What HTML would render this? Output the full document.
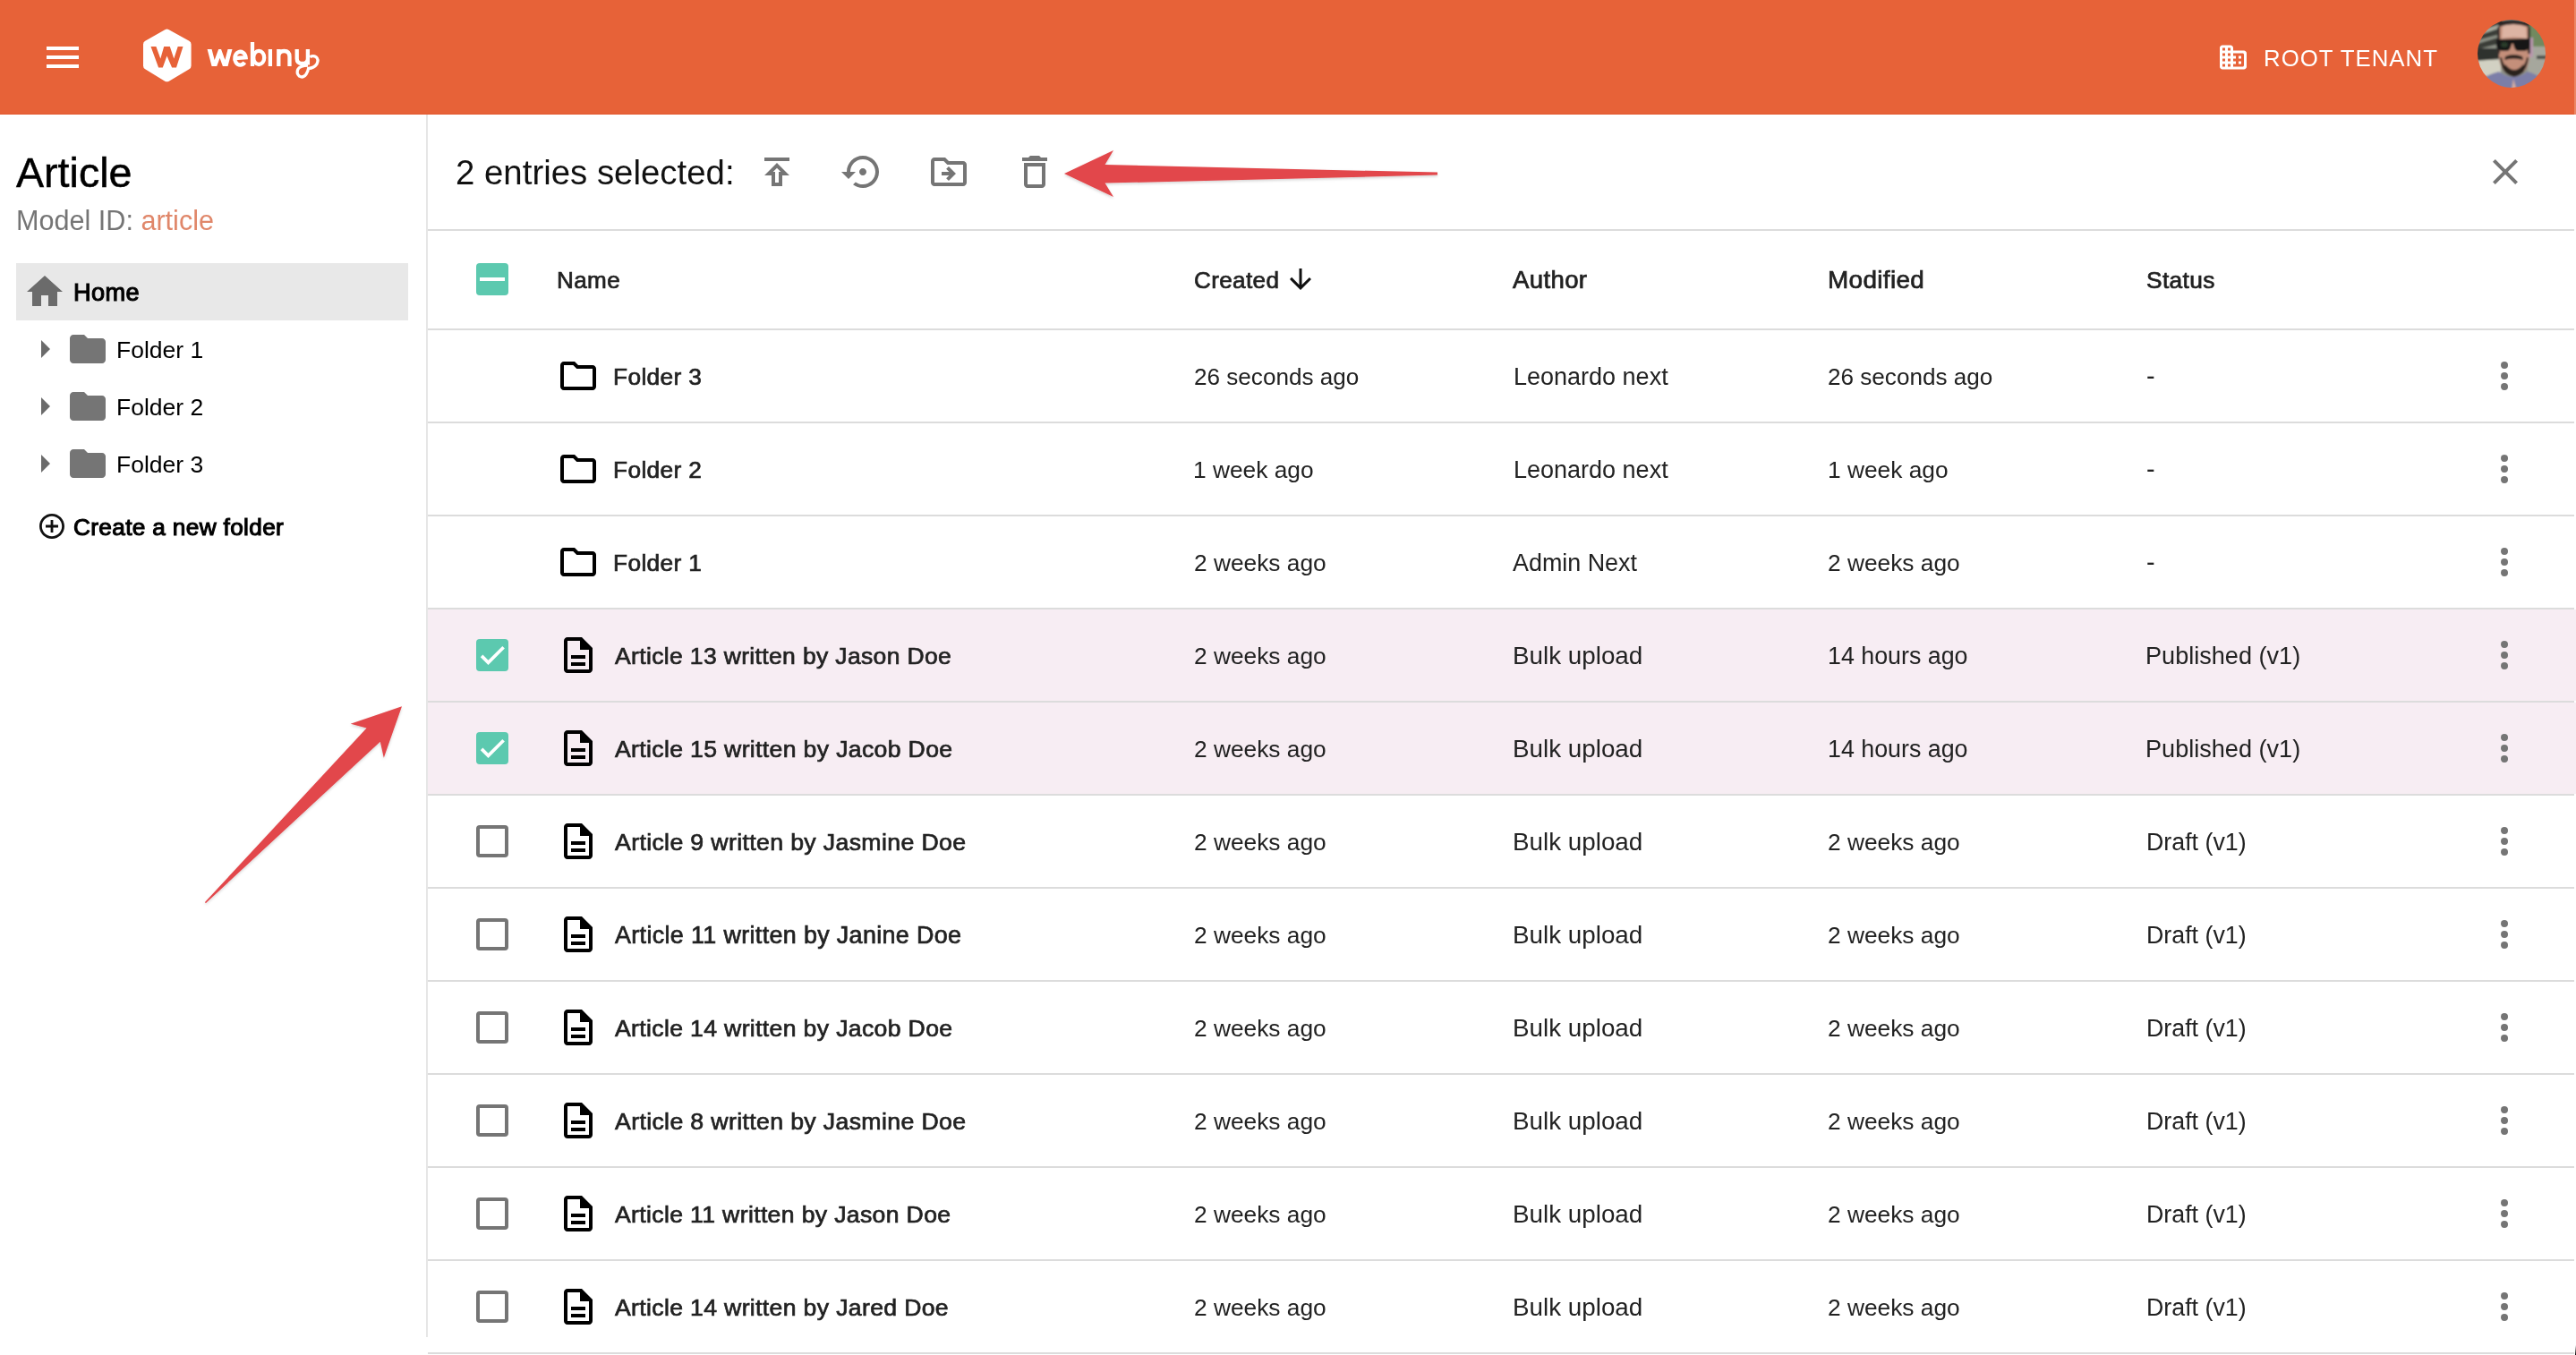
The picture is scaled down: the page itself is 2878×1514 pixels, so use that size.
<!DOCTYPE html><html><head><meta charset="utf-8"><style>
html,body{margin:0;padding:0;}
body{width:2878px;height:1514px;overflow:hidden;background:#fff;position:relative;font-family:"Liberation Sans",sans-serif;}
.t{position:absolute;white-space:nowrap;line-height:1;will-change:transform;}
.a{position:absolute;}
svg{position:absolute;overflow:visible;}
</style></head><body>
<div class="a" style="left:0;top:0;width:2878px;height:128px;background:#E76238;"></div>
<div class="a" style="left:0;top:127px;width:2876px;height:1px;background:#E2582E;"></div>
<div class="a" style="left:2876px;top:0;width:2px;height:128px;background:#EC8763;"></div>
<div class="a" style="left:52px;top:52px;width:36px;height:4px;background:#fff;"></div>
<div class="a" style="left:52px;top:62px;width:36px;height:4px;background:#fff;"></div>
<div class="a" style="left:52px;top:72px;width:36px;height:4px;background:#fff;"></div>
<svg style="left:150px;top:25px" width="75" height="75" viewBox="0 0 75 75">
<path d="M34.2 8.2 Q36.5 6.9 38.8 8.2 L61.4 20.8 Q63.6 22 63.6 24.6 L63.6 48.4 Q63.6 51 61.4 52.2 L38.8 65.7 Q36.5 67 34.2 65.7 L12.2 52.2 Q10 51 10 48.4 L10 24.6 Q10 22 12.2 20.8 Z" fill="#fff"/>
<path d="M18.5 27.1 L24.4 27.1 L29.3 40.4 L33.2 27.1 L39.8 27.1 L44.3 40.4 L48.7 27.1 L54.5 27.1 L47 50.6 L42.1 50.6 L36.5 37.6 L31.8 50.6 L27.1 50.6 Z" fill="#E76238"/>
</svg>
<svg style="left:225px;top:40px" width="140" height="55" viewBox="0 0 140 55">
<defs><clipPath id="wc"><rect x="0" y="14.9" width="140" height="19.1"/></clipPath></defs>
<g stroke="#fff" stroke-width="4.3" fill="none">
<path clip-path="url(#wc)" d="M8.3 12 L14.3 35 L20.6 18 L26.8 35 L32.8 12" stroke-width="4.8" stroke-linejoin="miter" stroke-miterlimit="10"/>
<path d="M37.3 25 L49.6 24.2 A6.2 7.4 0 1 0 48.3 29.8"/>
<path d="M57 7 L57 34"/>
<ellipse cx="64.2" cy="24.4" rx="6" ry="7.6"/>
<path d="M76.9 15 L76.9 34"/>
<path d="M86.3 34 L86.3 15 M86.3 23 Q86.3 17 92.4 17 Q98.5 17 98.5 23.5 L98.5 34"/>
<path d="M106.7 15 L106.7 25.5 Q106.7 31 112.8 31 Q118.9 31 118.9 25.5 M118.9 15 L118.9 32.6"/>
</g>
<path d="M119 33.2 Q110 33.5 107.8 37.5 Q105.8 42 109.5 45.2 Q113.5 47.6 117 43 Q119 40 119.6 36.5 Q126 36 129 31.5 Q131.5 26.5 128 23.6 Q125 21.6 121.3 23.6" stroke="#fff" stroke-width="3.3" fill="none"/>
</svg>
<svg style="left:2477px;top:46px" width="36" height="36" viewBox="0 0 24 24"><path d="M12 7V5c0-1.1-.9-2-2-2H4c-1.1 0-2 .9-2 2v14c0 1.1.9 2 2 2h16c1.1 0 2-.9 2-2V9c0-1.1-.9-2-2-2h-8zM6 19H4v-2h2v2zm0-4H4v-2h2v2zm0-4H4V9h2v2zm0-4H4V5h2v2zm4 12H8v-2h2v2zm0-4H8v-2h2v2zm0-4H8V9h2v2zm0-4H8V5h2v2zm9 12h-7v-2h2v-2h-2v-2h2v-2h-2V9h7c.55 0 1 .45 1 1v8c0 .55-.45 1-1 1zm-1-8h-2v2h2v-2zm0 4h-2v2h2v-2z" fill="#fff"/></svg>
<svg style="left:2768px;top:22px" width="76" height="76" viewBox="0 0 76 76">
<defs><clipPath id="cc"><circle cx="38" cy="38" r="38"/></clipPath>
<filter id="bl" x="-10%" y="-10%" width="120%" height="120%"><feGaussianBlur stdDeviation="0.9"/></filter></defs>
<g clip-path="url(#cc)"><g filter="url(#bl)">
<rect x="-4" y="-4" width="84" height="84" fill="#8e9288"/>
<path d="M-4 6 L28 -4 L28 26 L-4 34Z" fill="#3a3e39"/>
<path d="M-4 14 L26 5 L26 9 L-4 19Z" fill="#a7ab9f"/>
<path d="M-4 24 L26 16 L26 19 L-4 28Z" fill="#8d9186"/>
<rect x="-4" y="32" width="28" height="14" fill="#2f332e"/>

<path d="M-4 46 L26 44 L26 62 L-4 64Z" fill="#d2d1c3"/>
<rect x="56" y="4" width="24" height="26" fill="#71895f"/>
<rect x="56" y="30" width="24" height="34" fill="#a6a79d"/>
<rect x="66" y="40" width="14" height="4" fill="#4d504b"/>
<rect x="58" y="20" width="4" height="22" fill="#b897ad"/>
<path d="M24 8 Q26 2 40 2 Q55 2 57 9 L58 42 Q57 60 41 64 Q25 60 24 42Z" fill="#c48f7a"/>
<path d="M28 7 Q40 3 54 8 L55 21 Q40 18 27 21Z" fill="#ddb4a3"/>
<path d="M22 3 Q40 -3 59 4 L57 8 Q40 2 24 8Z" fill="#2b2725"/>
<path d="M22 8 L25 8 L25 38 L22 38Z" fill="#3b322d"/>
<path d="M56 8 L59 8 L59 38 L56 38Z" fill="#3b322d"/>
<path d="M21 22 L59 21 L58 30 Q57 35 51 35 L45 35 Q41 34 40 27 L38 27 Q37 34 33 35 L27 35 Q22 34 21 30Z" fill="#151715"/>
<ellipse cx="30" cy="28" rx="4" ry="3" fill="#2a3a2c"/>
<path d="M31 41 Q40 37 50 41 L51 45 Q40 42 30 45Z" fill="#2a211d"/>
<path d="M25 42 Q26 61 41 64 Q55 61 57 42 L55 42 Q53 55 41 57 Q29 55 27 42Z" fill="#2c231f"/>
<path d="M31 50 Q41 62 51 50 L52 58 Q41 67 30 58Z" fill="#2c231f"/>
<path d="M-4 80 L-4 72 Q8 62 24 58 Q40 70 56 58 Q70 62 80 72 L80 80Z" fill="#7c7ea8"/>
<path d="M40 66 L44 80 L38 80Z" fill="#d8b0a0"/>
</g></g></svg>
<div class="a" style="left:476px;top:128px;width:2px;height:1366px;background:#E6E6E6;"></div>
<div class="a" style="left:18px;top:294px;width:438px;height:64px;background:#E8E8E8;"></div>
<svg style="left:26px;top:302px" width="48" height="48" viewBox="0 0 24 24"><path d="M10 20v-6h4v6h5v-8h3L12 3 2 12h3v8z" fill="#6b6b6b"/></svg>
<svg style="left:26px;top:366px" width="48" height="48" viewBox="0 0 24 24"><path d="M10 17l5-5-5-5v10z" fill="#6b6b6b"/></svg>
<svg style="left:74px;top:366px" width="48" height="48" viewBox="0 0 24 24"><path d="M10 4H4c-1.1 0-1.99.9-1.99 2L2 18c0 1.1.9 2 2 2h16c1.1 0 2-.9 2-2V8c0-1.1-.9-2-2-2h-8l-2-2z" fill="#757575"/></svg>
<svg style="left:26px;top:430px" width="48" height="48" viewBox="0 0 24 24"><path d="M10 17l5-5-5-5v10z" fill="#6b6b6b"/></svg>
<svg style="left:74px;top:430px" width="48" height="48" viewBox="0 0 24 24"><path d="M10 4H4c-1.1 0-1.99.9-1.99 2L2 18c0 1.1.9 2 2 2h16c1.1 0 2-.9 2-2V8c0-1.1-.9-2-2-2h-8l-2-2z" fill="#757575"/></svg>
<svg style="left:26px;top:494px" width="48" height="48" viewBox="0 0 24 24"><path d="M10 17l5-5-5-5v10z" fill="#6b6b6b"/></svg>
<svg style="left:74px;top:494px" width="48" height="48" viewBox="0 0 24 24"><path d="M10 4H4c-1.1 0-1.99.9-1.99 2L2 18c0 1.1.9 2 2 2h16c1.1 0 2-.9 2-2V8c0-1.1-.9-2-2-2h-8l-2-2z" fill="#757575"/></svg>
<svg style="left:44px;top:574px" width="28" height="28" viewBox="2 2 20 20"><path d="M13 7h-2v4H7v2h4v4h2v-4h4v-2h-4V7zm-1-5C6.48 2 2 6.48 2 12s4.48 10 10 10 10-4.48 10-10S17.52 2 12 2zm0 18c-4.41 0-8-3.59-8-8s3.59-8 8-8 8 3.59 8 8-3.59 8-8 8z" fill="#111"/></svg>
<svg style="left:844px;top:168px" width="48" height="48" viewBox="0 0 24 24"><path d="M5 4h14v2H5zm0 10h4v6h6v-6h4l-7-7-7 7zm8-2v6h-2v-6H9.83L12 9.83 14.17 12H13z" fill="#757575"/></svg>
<svg style="left:940px;top:168px" width="48" height="48" viewBox="0 0 24 24"><path d="M14 12c0-1.1-.9-2-2-2s-2 .9-2 2 .9 2 2 2 2-.9 2-2zm-2-9c-4.97 0-9 4.030-9 9H0l4 4 4-4H5c0-3.87 3.13-7 7-7s7 3.13 7 7-3.13 7-7 7c-1.51 0-2.910-.49-4.06-1.3l-1.42 1.44C8.04 20.3 9.94 21 12 21c4.97 0 9-4.03 9-9s-4.03-9-9-9z" fill="#757575"/></svg>
<svg style="left:1036px;top:168px" width="48" height="48" viewBox="0 0 24 24"><path d="M20 6h-8l-2-2H4c-1.1 0-1.99.9-1.99 2L2 18c0 1.1.9 2 2 2h16c1.1 0 2-.9 2-2V8c0-1.1-.9-2-2-2zm0 12H4V6h5.17l2 2H20v10zm-7.84-6H8v2h4.16l-1.59 1.59L11.99 17 16 13.01 11.990 9l-1.41 1.41L12.16 12z" fill="#757575"/></svg>
<svg style="left:1132px;top:168px" width="48" height="48" viewBox="0 0 24 24"><path d="M16 9v10H8V9h8m-1.5-6h-5l-1 1H5v2h14V4h-3.5l-1-1zM18 7H6v12c0 1.1.9 2 2 2h8c1.1 0 2-.9 2-2V7z" fill="#757575"/></svg>
<svg style="left:2775px;top:168px" width="48" height="48" viewBox="0 0 24 24"><path d="M19 6.41L17.59 5 12 10.59 6.41 5 5 6.41 10.59 12 5 17.59 6.41 19 12 13.41 17.590 19 19 17.59 13.41 12z" fill="#757575"/></svg>
<div class="a" style="left:478px;top:256px;width:2398px;height:2px;background:#DCDCDC;"></div>
<div class="a" style="left:532px;top:294px;width:36px;height:36px;border-radius:4px;background:#5CC9AF;"></div>
<div class="a" style="left:536px;top:310px;width:28px;height:4px;background:#fff;"></div>
<svg style="left:1441px;top:300px" width="24" height="24" viewBox="4 4 16 16"><path d="M20 12l-1.41-1.41L13 16.17V4h-2v12.17l-5.58-5.59L4 12l8 8 8-8z" fill="#111"/></svg>
<div class="a" style="left:478px;top:367px;width:2398px;height:2px;background:#DCDCDC;"></div>
<svg style="left:622px;top:396px" width="48" height="48" viewBox="0 0 24 24"><path d="M9.17 6l2 2H20v10H4V6h5.17M10 4H4c-1.1 0-1.99.9-1.99 2L2 18c0 1.1.9 2 2 2h16c1.1 0 2-.9 2-2V8c0-1.1-.9-2-2-2h-8l-2-2z" fill="#000"/></svg>
<svg style="left:2774px;top:396px" width="48" height="48" viewBox="0 0 24 24"><circle cx="12" cy="6" r="2" fill="#757575"/><circle cx="12" cy="12" r="2" fill="#757575"/><circle cx="12" cy="18" r="2" fill="#757575"/></svg>
<div class="a" style="left:478px;top:471px;width:2398px;height:2px;background:#DCDCDC;"></div>
<svg style="left:622px;top:500px" width="48" height="48" viewBox="0 0 24 24"><path d="M9.17 6l2 2H20v10H4V6h5.17M10 4H4c-1.1 0-1.99.9-1.99 2L2 18c0 1.1.9 2 2 2h16c1.1 0 2-.9 2-2V8c0-1.1-.9-2-2-2h-8l-2-2z" fill="#000"/></svg>
<svg style="left:2774px;top:500px" width="48" height="48" viewBox="0 0 24 24"><circle cx="12" cy="6" r="2" fill="#757575"/><circle cx="12" cy="12" r="2" fill="#757575"/><circle cx="12" cy="18" r="2" fill="#757575"/></svg>
<div class="a" style="left:478px;top:575px;width:2398px;height:2px;background:#DCDCDC;"></div>
<svg style="left:622px;top:604px" width="48" height="48" viewBox="0 0 24 24"><path d="M9.17 6l2 2H20v10H4V6h5.17M10 4H4c-1.1 0-1.99.9-1.99 2L2 18c0 1.1.9 2 2 2h16c1.1 0 2-.9 2-2V8c0-1.1-.9-2-2-2h-8l-2-2z" fill="#000"/></svg>
<svg style="left:2774px;top:604px" width="48" height="48" viewBox="0 0 24 24"><circle cx="12" cy="6" r="2" fill="#757575"/><circle cx="12" cy="12" r="2" fill="#757575"/><circle cx="12" cy="18" r="2" fill="#757575"/></svg>
<div class="a" style="left:478px;top:681px;width:2400px;height:102px;background:#F7EDF3;"></div>
<div class="a" style="left:478px;top:679px;width:2398px;height:2px;background:#DCDCDC;"></div>
<div class="a" style="left:532px;top:714px;width:36px;height:36px;border-radius:4px;background:#5CC9AF;"></div>
<svg style="left:532px;top:714px" width="36" height="36" viewBox="0 0 36 36"><path d="M6.1 18.9 L13.5 26.3 L30.6 9.3" stroke="#fff" stroke-width="3.7" stroke-linejoin="miter" fill="none"/></svg>
<svg style="left:622px;top:708px" width="48" height="48" viewBox="0 0 24 24"><path d="M8 16h8v2H8zm0-4h8v2H8zm6-10H6c-1.1 0-2 .9-2 2v16c0 1.1.89 2 1.99 2H18c1.1 0 2-.9 2-2V8l-6-6zm4 18H6V4h7v5h5v11z" fill="#000"/></svg>
<svg style="left:2774px;top:708px" width="48" height="48" viewBox="0 0 24 24"><circle cx="12" cy="6" r="2" fill="#757575"/><circle cx="12" cy="12" r="2" fill="#757575"/><circle cx="12" cy="18" r="2" fill="#757575"/></svg>
<div class="a" style="left:478px;top:785px;width:2400px;height:102px;background:#F7EDF3;"></div>
<div class="a" style="left:478px;top:783px;width:2398px;height:2px;background:#DCDCDC;"></div>
<div class="a" style="left:532px;top:818px;width:36px;height:36px;border-radius:4px;background:#5CC9AF;"></div>
<svg style="left:532px;top:818px" width="36" height="36" viewBox="0 0 36 36"><path d="M6.1 18.9 L13.5 26.3 L30.6 9.3" stroke="#fff" stroke-width="3.7" stroke-linejoin="miter" fill="none"/></svg>
<svg style="left:622px;top:812px" width="48" height="48" viewBox="0 0 24 24"><path d="M8 16h8v2H8zm0-4h8v2H8zm6-10H6c-1.1 0-2 .9-2 2v16c0 1.1.89 2 1.99 2H18c1.1 0 2-.9 2-2V8l-6-6zm4 18H6V4h7v5h5v11z" fill="#000"/></svg>
<svg style="left:2774px;top:812px" width="48" height="48" viewBox="0 0 24 24"><circle cx="12" cy="6" r="2" fill="#757575"/><circle cx="12" cy="12" r="2" fill="#757575"/><circle cx="12" cy="18" r="2" fill="#757575"/></svg>
<div class="a" style="left:478px;top:887px;width:2398px;height:2px;background:#DCDCDC;"></div>
<div class="a" style="left:532px;top:922px;width:36px;height:36px;border-radius:4px;box-sizing:border-box;border:4px solid #757575;"></div>
<svg style="left:622px;top:916px" width="48" height="48" viewBox="0 0 24 24"><path d="M8 16h8v2H8zm0-4h8v2H8zm6-10H6c-1.1 0-2 .9-2 2v16c0 1.1.89 2 1.99 2H18c1.1 0 2-.9 2-2V8l-6-6zm4 18H6V4h7v5h5v11z" fill="#000"/></svg>
<svg style="left:2774px;top:916px" width="48" height="48" viewBox="0 0 24 24"><circle cx="12" cy="6" r="2" fill="#757575"/><circle cx="12" cy="12" r="2" fill="#757575"/><circle cx="12" cy="18" r="2" fill="#757575"/></svg>
<div class="a" style="left:478px;top:991px;width:2398px;height:2px;background:#DCDCDC;"></div>
<div class="a" style="left:532px;top:1026px;width:36px;height:36px;border-radius:4px;box-sizing:border-box;border:4px solid #757575;"></div>
<svg style="left:622px;top:1020px" width="48" height="48" viewBox="0 0 24 24"><path d="M8 16h8v2H8zm0-4h8v2H8zm6-10H6c-1.1 0-2 .9-2 2v16c0 1.1.89 2 1.99 2H18c1.1 0 2-.9 2-2V8l-6-6zm4 18H6V4h7v5h5v11z" fill="#000"/></svg>
<svg style="left:2774px;top:1020px" width="48" height="48" viewBox="0 0 24 24"><circle cx="12" cy="6" r="2" fill="#757575"/><circle cx="12" cy="12" r="2" fill="#757575"/><circle cx="12" cy="18" r="2" fill="#757575"/></svg>
<div class="a" style="left:478px;top:1095px;width:2398px;height:2px;background:#DCDCDC;"></div>
<div class="a" style="left:532px;top:1130px;width:36px;height:36px;border-radius:4px;box-sizing:border-box;border:4px solid #757575;"></div>
<svg style="left:622px;top:1124px" width="48" height="48" viewBox="0 0 24 24"><path d="M8 16h8v2H8zm0-4h8v2H8zm6-10H6c-1.1 0-2 .9-2 2v16c0 1.1.89 2 1.99 2H18c1.1 0 2-.9 2-2V8l-6-6zm4 18H6V4h7v5h5v11z" fill="#000"/></svg>
<svg style="left:2774px;top:1124px" width="48" height="48" viewBox="0 0 24 24"><circle cx="12" cy="6" r="2" fill="#757575"/><circle cx="12" cy="12" r="2" fill="#757575"/><circle cx="12" cy="18" r="2" fill="#757575"/></svg>
<div class="a" style="left:478px;top:1199px;width:2398px;height:2px;background:#DCDCDC;"></div>
<div class="a" style="left:532px;top:1234px;width:36px;height:36px;border-radius:4px;box-sizing:border-box;border:4px solid #757575;"></div>
<svg style="left:622px;top:1228px" width="48" height="48" viewBox="0 0 24 24"><path d="M8 16h8v2H8zm0-4h8v2H8zm6-10H6c-1.1 0-2 .9-2 2v16c0 1.1.89 2 1.99 2H18c1.1 0 2-.9 2-2V8l-6-6zm4 18H6V4h7v5h5v11z" fill="#000"/></svg>
<svg style="left:2774px;top:1228px" width="48" height="48" viewBox="0 0 24 24"><circle cx="12" cy="6" r="2" fill="#757575"/><circle cx="12" cy="12" r="2" fill="#757575"/><circle cx="12" cy="18" r="2" fill="#757575"/></svg>
<div class="a" style="left:478px;top:1303px;width:2398px;height:2px;background:#DCDCDC;"></div>
<div class="a" style="left:532px;top:1338px;width:36px;height:36px;border-radius:4px;box-sizing:border-box;border:4px solid #757575;"></div>
<svg style="left:622px;top:1332px" width="48" height="48" viewBox="0 0 24 24"><path d="M8 16h8v2H8zm0-4h8v2H8zm6-10H6c-1.1 0-2 .9-2 2v16c0 1.1.89 2 1.99 2H18c1.1 0 2-.9 2-2V8l-6-6zm4 18H6V4h7v5h5v11z" fill="#000"/></svg>
<svg style="left:2774px;top:1332px" width="48" height="48" viewBox="0 0 24 24"><circle cx="12" cy="6" r="2" fill="#757575"/><circle cx="12" cy="12" r="2" fill="#757575"/><circle cx="12" cy="18" r="2" fill="#757575"/></svg>
<div class="a" style="left:478px;top:1407px;width:2398px;height:2px;background:#DCDCDC;"></div>
<div class="a" style="left:532px;top:1442px;width:36px;height:36px;border-radius:4px;box-sizing:border-box;border:4px solid #757575;"></div>
<svg style="left:622px;top:1436px" width="48" height="48" viewBox="0 0 24 24"><path d="M8 16h8v2H8zm0-4h8v2H8zm6-10H6c-1.1 0-2 .9-2 2v16c0 1.1.89 2 1.99 2H18c1.1 0 2-.9 2-2V8l-6-6zm4 18H6V4h7v5h5v11z" fill="#000"/></svg>
<svg style="left:2774px;top:1436px" width="48" height="48" viewBox="0 0 24 24"><circle cx="12" cy="6" r="2" fill="#757575"/><circle cx="12" cy="12" r="2" fill="#757575"/><circle cx="12" cy="18" r="2" fill="#757575"/></svg>
<div class="a" style="left:478px;top:1511px;width:2398px;height:2px;background:#DCDCDC;"></div>
<div class="a" style="left:2877px;top:1503px;width:1px;height:11px;background:linear-gradient(rgba(0,0,0,0),#000);"></div>
<div class="t" style="left:2529.2px;top:53px;font-size:25.8px;color:#fff;letter-spacing:1px;">ROOT TENANT</div>
<div class="t" style="left:509.2px;top:174px;font-size:38.4px;color:#111;">2 entries selected:</div>
<div class="t" style="left:18.0px;top:170px;font-size:46.6px;color:#000;-webkit-text-stroke:0.5px currentColor;">Article</div>
<div class="t" style="left:17.8px;top:231px;font-size:30.6px;color:#757575;">Model ID: <span style="color:#E0876A">article</span></div>
<div class="t" style="left:82.2px;top:313px;font-size:27.2px;-webkit-text-stroke:0.7px currentColor;letter-spacing:0.35px;color:#000;-webkit-text-stroke:1.1px currentColor;">Home</div>
<div class="t" style="left:130.4px;top:378px;font-size:26.5px;color:#000;">Folder 1</div>
<div class="t" style="left:130.4px;top:442px;font-size:26.5px;color:#000;">Folder 2</div>
<div class="t" style="left:130.4px;top:506px;font-size:26.5px;color:#000;">Folder 3</div>
<div class="t" style="left:82.0px;top:576px;font-size:26.2px;-webkit-text-stroke:0.7px currentColor;letter-spacing:0.35px;color:#000;-webkit-text-stroke:1.1px currentColor;">Create a new folder</div>
<div class="t" style="left:622.0px;top:300px;font-size:26.1px;-webkit-text-stroke:0.7px currentColor;letter-spacing:0.35px;color:#222;">Name</div>
<div class="t" style="left:1333.6px;top:300px;font-size:26.1px;-webkit-text-stroke:0.7px currentColor;letter-spacing:0.35px;color:#222;">Created</div>
<div class="t" style="left:1689.6px;top:299px;font-size:27.6px;-webkit-text-stroke:0.7px currentColor;letter-spacing:0.35px;color:#222;">Author</div>
<div class="t" style="left:2041.6px;top:299px;font-size:27.9px;-webkit-text-stroke:0.7px currentColor;letter-spacing:0.35px;color:#222;">Modified</div>
<div class="t" style="left:2397.6px;top:300px;font-size:26.3px;-webkit-text-stroke:0.7px currentColor;letter-spacing:0.35px;color:#222;">Status</div>
<div class="t" style="left:685.2px;top:408px;font-size:26.3px;-webkit-text-stroke:0.7px currentColor;letter-spacing:0.35px;color:#222;">Folder 3</div>
<div class="t" style="left:1333.5px;top:408px;font-size:26.1px;color:#222;">26 seconds ago</div>
<div class="t" style="left:1690.5px;top:408px;font-size:27.0px;color:#222;">Leonardo next</div>
<div class="t" style="left:2042.1px;top:408px;font-size:26.1px;color:#222;">26 seconds ago</div>
<div class="t" style="left:2398.0px;top:406px;font-size:28.8px;color:#222;">-</div>
<div class="t" style="left:685.2px;top:512px;font-size:26.3px;-webkit-text-stroke:0.7px currentColor;letter-spacing:0.35px;color:#222;">Folder 2</div>
<div class="t" style="left:1333.3px;top:512px;font-size:26.3px;color:#222;">1 week ago</div>
<div class="t" style="left:1690.5px;top:512px;font-size:27.0px;color:#222;">Leonardo next</div>
<div class="t" style="left:2041.9px;top:512px;font-size:26.3px;color:#222;">1 week ago</div>
<div class="t" style="left:2398.0px;top:510px;font-size:28.8px;color:#222;">-</div>
<div class="t" style="left:685.2px;top:616px;font-size:26.3px;-webkit-text-stroke:0.7px currentColor;letter-spacing:0.35px;color:#222;">Folder 1</div>
<div class="t" style="left:1333.5px;top:616px;font-size:26.3px;color:#222;">2 weeks ago</div>
<div class="t" style="left:1689.7px;top:616px;font-size:26.9px;color:#222;">Admin Next</div>
<div class="t" style="left:2042.1px;top:616px;font-size:26.3px;color:#222;">2 weeks ago</div>
<div class="t" style="left:2398.0px;top:614px;font-size:28.8px;color:#222;">-</div>
<div class="t" style="left:686.6px;top:720px;font-size:26.5px;-webkit-text-stroke:0.7px currentColor;letter-spacing:0.35px;color:#222;">Article 13 written by Jason Doe</div>
<div class="t" style="left:1333.5px;top:720px;font-size:26.3px;color:#222;">2 weeks ago</div>
<div class="t" style="left:1689.9px;top:719px;font-size:27.8px;color:#222;">Bulk upload</div>
<div class="t" style="left:2041.9px;top:720px;font-size:26.8px;color:#222;">14 hours ago</div>
<div class="t" style="left:2397.1px;top:719px;font-size:27.1px;color:#222;">Published (v1)</div>
<div class="t" style="left:686.6px;top:824px;font-size:26.6px;-webkit-text-stroke:0.7px currentColor;letter-spacing:0.35px;color:#222;">Article 15 written by Jacob Doe</div>
<div class="t" style="left:1333.5px;top:824px;font-size:26.3px;color:#222;">2 weeks ago</div>
<div class="t" style="left:1689.9px;top:823px;font-size:27.8px;color:#222;">Bulk upload</div>
<div class="t" style="left:2041.9px;top:824px;font-size:26.8px;color:#222;">14 hours ago</div>
<div class="t" style="left:2397.1px;top:823px;font-size:27.1px;color:#222;">Published (v1)</div>
<div class="t" style="left:686.6px;top:928px;font-size:26.7px;-webkit-text-stroke:0.7px currentColor;letter-spacing:0.35px;color:#222;">Article 9 written by Jasmine Doe</div>
<div class="t" style="left:1333.5px;top:928px;font-size:26.3px;color:#222;">2 weeks ago</div>
<div class="t" style="left:1689.9px;top:927px;font-size:27.8px;color:#222;">Bulk upload</div>
<div class="t" style="left:2042.1px;top:928px;font-size:26.3px;color:#222;">2 weeks ago</div>
<div class="t" style="left:2398.0px;top:928px;font-size:26.8px;color:#222;">Draft (v1)</div>
<div class="t" style="left:686.6px;top:1032px;font-size:26.9px;-webkit-text-stroke:0.7px currentColor;letter-spacing:0.35px;color:#222;">Article 11 written by Janine Doe</div>
<div class="t" style="left:1333.5px;top:1032px;font-size:26.3px;color:#222;">2 weeks ago</div>
<div class="t" style="left:1689.9px;top:1031px;font-size:27.8px;color:#222;">Bulk upload</div>
<div class="t" style="left:2042.1px;top:1032px;font-size:26.3px;color:#222;">2 weeks ago</div>
<div class="t" style="left:2398.0px;top:1032px;font-size:26.8px;color:#222;">Draft (v1)</div>
<div class="t" style="left:686.6px;top:1136px;font-size:26.6px;-webkit-text-stroke:0.7px currentColor;letter-spacing:0.35px;color:#222;">Article 14 written by Jacob Doe</div>
<div class="t" style="left:1333.5px;top:1136px;font-size:26.3px;color:#222;">2 weeks ago</div>
<div class="t" style="left:1689.9px;top:1135px;font-size:27.8px;color:#222;">Bulk upload</div>
<div class="t" style="left:2042.1px;top:1136px;font-size:26.3px;color:#222;">2 weeks ago</div>
<div class="t" style="left:2398.0px;top:1136px;font-size:26.8px;color:#222;">Draft (v1)</div>
<div class="t" style="left:686.6px;top:1240px;font-size:26.7px;-webkit-text-stroke:0.7px currentColor;letter-spacing:0.35px;color:#222;">Article 8 written by Jasmine Doe</div>
<div class="t" style="left:1333.5px;top:1240px;font-size:26.3px;color:#222;">2 weeks ago</div>
<div class="t" style="left:1689.9px;top:1239px;font-size:27.8px;color:#222;">Bulk upload</div>
<div class="t" style="left:2042.1px;top:1240px;font-size:26.3px;color:#222;">2 weeks ago</div>
<div class="t" style="left:2398.0px;top:1240px;font-size:26.8px;color:#222;">Draft (v1)</div>
<div class="t" style="left:686.6px;top:1344px;font-size:26.6px;-webkit-text-stroke:0.7px currentColor;letter-spacing:0.35px;color:#222;">Article 11 written by Jason Doe</div>
<div class="t" style="left:1333.5px;top:1344px;font-size:26.3px;color:#222;">2 weeks ago</div>
<div class="t" style="left:1689.9px;top:1343px;font-size:27.8px;color:#222;">Bulk upload</div>
<div class="t" style="left:2042.1px;top:1344px;font-size:26.3px;color:#222;">2 weeks ago</div>
<div class="t" style="left:2398.0px;top:1344px;font-size:26.8px;color:#222;">Draft (v1)</div>
<div class="t" style="left:686.6px;top:1448px;font-size:26.6px;-webkit-text-stroke:0.7px currentColor;letter-spacing:0.35px;color:#222;">Article 14 written by Jared Doe</div>
<div class="t" style="left:1333.5px;top:1448px;font-size:26.3px;color:#222;">2 weeks ago</div>
<div class="t" style="left:1689.9px;top:1447px;font-size:27.8px;color:#222;">Bulk upload</div>
<div class="t" style="left:2042.1px;top:1448px;font-size:26.3px;color:#222;">2 weeks ago</div>
<div class="t" style="left:2398.0px;top:1448px;font-size:26.8px;color:#222;">Draft (v1)</div>
<svg style="left:0;top:0" width="2878" height="1514" viewBox="0 0 2878 1514">
<defs><filter id="sh" x="-5%" y="-20%" width="110%" height="140%"><feDropShadow dx="0" dy="1.5" stdDeviation="1.5" flood-color="#000" flood-opacity="0.18"/></filter></defs>
<g filter="url(#sh)">
<path d="M1189 194 L1244 168 L1234.5 184 L1606 192.6 L1606 195.6 L1234.5 204.6 L1244 220 Z" fill="#E2474B"/>
<path d="M449 789.3 L391.7 808.8 L409.6 813.4 L229 1008 L229.8 1009.2 L424.8 828.8 L428.8 846.7 Z" fill="#E2474B"/>
</g></svg>
</body></html>
